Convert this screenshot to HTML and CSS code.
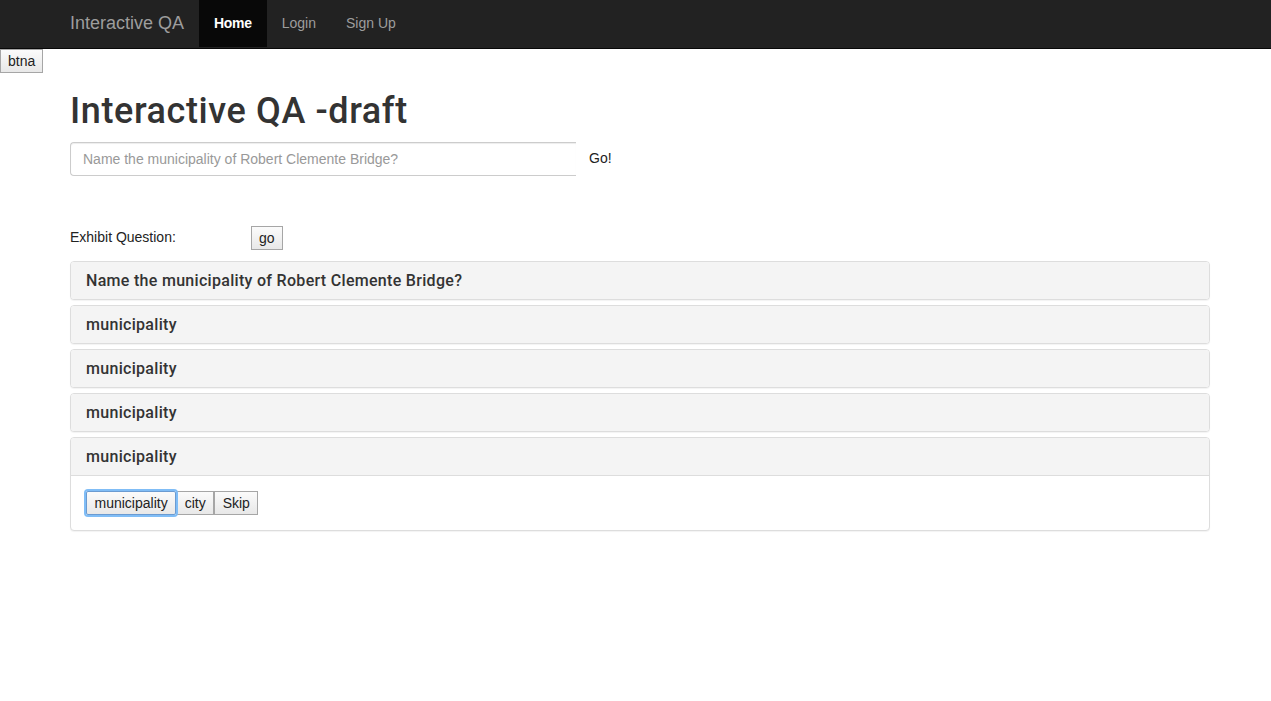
FILE: index.html
```html
<!DOCTYPE html>
<html>
<head>
<meta charset="utf-8">
<title>Interactive QA</title>
<link rel="stylesheet" href="styles.css">
</head>
<body>
<nav class="navbar">
  <div class="nav-inner">
    <a class="brand" href="#">Interactive QA</a>
    <ul class="nav">
      <li><a class="active" href="#">Home</a></li>
      <li><a href="#">Login</a></li>
      <li><a href="#">Sign Up</a></li>
    </ul>
  </div>
</nav>
<button class="btn btna">btna</button>
<main class="container">
  <h1 class="title">Interactive QA -draft</h1>
  <div class="input-group">
    <input class="form-control" type="text" placeholder="Name the municipality of Robert Clemente Bridge?">
    <span class="go-link">Go!</span>
  </div>
  <div class="exhibit">
    <span class="exhibit-label">Exhibit Question:</span>
    <button class="btn">go</button>
  </div>
  <div class="panel-group">
    <div class="panel"><div class="panel-heading"><h3>Name the municipality of Robert Clemente Bridge?</h3></div></div>
    <div class="panel"><div class="panel-heading"><h3>municipality</h3></div></div>
    <div class="panel"><div class="panel-heading"><h3>municipality</h3></div></div>
    <div class="panel"><div class="panel-heading"><h3>municipality</h3></div></div>
    <div class="panel">
      <div class="panel-heading"><h3>municipality</h3></div>
      <div class="panel-body">
        <button class="btn focused">municipality</button><button class="btn">city</button><button class="btn">Skip</button>
      </div>
    </div>
  </div>
</main>
</body>
</html>
```

FILE: styles.css
```css
* { box-sizing: border-box; }
html, body { margin: 0; padding: 0; }
body {
  font-family: "Liberation Sans", Arial, sans-serif;
  font-size: 14px;
  line-height: 1.42857;
  color: #333;
  background: #fff;
}
.navbar {
  background: #222;
  border-bottom: 1px solid #080808;
  height: 49px;
}
.nav-inner {
  display: flex;
  padding-left: 55px;
  height: 48px;
}
.brand {
  display: block;
  padding: 0 15px;
  font-size: 18px;
  line-height: 46px;
  color: #9d9d9d;
  text-decoration: none;
}
.nav {
  list-style: none;
  margin: 0;
  padding: 0;
  display: flex;
}
.nav a {
  display: block;
  padding: 0 15px;
  line-height: 47px;
  color: #9d9d9d;
  text-decoration: none;
}
.nav a.active {
  background: #080808;
  color: #fff;
  font-weight: 700;
  letter-spacing: -0.3px;
}
.btn {
  font-family: "Liberation Sans", Arial, sans-serif;
  font-size: 14px;
  color: #222;
  background: linear-gradient(#fbfbfb, #e8e8e8);
  border: 1px solid #a6a6a6;
  border-radius: 0;
  padding: 2px 7px;
  height: 24px;
  line-height: 18px;
  margin: 0;
  vertical-align: middle;
}
.btna {
  display: block;
  height: 24px;
  padding: 2px 7px;
}
.container {
  width: 1140px;
  margin-left: 70px;
}
.title {
  font-family: Roboto, "Liberation Sans", Arial, sans-serif;
  font-size: 36px;
  font-weight: 500;
  line-height: 1.1;
  margin: 19px 0 10px;
  color: #333;
  letter-spacing: 0.6px;
}
.input-group {
  display: flex;
  align-items: center;
  height: 34px;
}
.form-control {
  width: 506px;
  height: 34px;
  padding: 6px 12px;
  font-family: "Liberation Sans", Arial, sans-serif;
  font-size: 14px;
  color: #555;
  border: 1px solid #ccc;
  border-right: none;
  border-radius: 4px 0 0 4px;
  box-shadow: inset 0 1px 1px rgba(0,0,0,.075);
  outline: none;
}
.form-control::placeholder { color: #999; }
.go-link {
  padding-left: 13px;
  color: #222;
  font-size: 14px;
}
.exhibit {
  display: flex;
  align-items: center;
  margin-top: 50px;
  height: 24px;
}
.exhibit-label {
  width: 181px;
  color: #222;
}
.panel-group {
  margin-top: 11px;
}
.panel {
  border: 1px solid #ddd;
  border-radius: 4px;
  box-shadow: 0 1px 1px rgba(0,0,0,.05);
  background: #fff;
  margin-bottom: 5px;
  overflow: hidden;
}
.panel-heading {
  background: #f4f4f4;
  padding: 10px 15px;
}
.panel-heading h3 {
  margin: 0;
  font-family: Roboto, "Liberation Sans", Arial, sans-serif;
  font-size: 16px;
  font-weight: 500;
  line-height: 17px;
  color: #333;
  letter-spacing: 0.3px;
}
.panel-body {
  border-top: 1px solid #ddd;
  padding: 15px;
  display: flex;
  align-items: center;
}
.panel-body .btn {
  padding: 2px 7.5px;
}
.focused {
  outline: none;
  box-shadow: 0 0 0 2px #80bdf6;
  border-radius: 2px;
  border-color: #6b9bd1;
  position: relative;
  z-index: 1;
}
```
